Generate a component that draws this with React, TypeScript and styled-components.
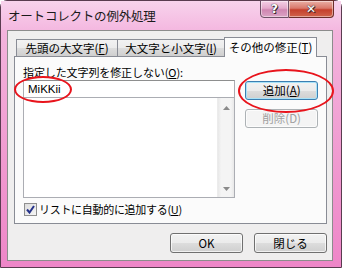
import React from "react";
import styled, { createGlobalStyle } from "styled-components";

const GlobalStyle = createGlobalStyle`
  html, body {
    margin: 0;
    padding: 0;
    width: 342px;
    height: 268px;
    overflow: hidden;
    background: #fff;
  }
  * { box-sizing: border-box; }
`;

const jp = `"Noto Sans CJK JP", "Noto Sans", sans-serif`;

const Window = styled.div`
  position: relative;
  width: 342px;
  height: 268px;
  border: 1px solid #5a3c50;
  border-radius: 7px 7px 0 0;
  background: linear-gradient(180deg, #f6c3e4 0%, #f3b3dc 12%, #f09ad0 60%, #ee86c8 100%);
  display: flex;
  flex-direction: column;
  font-family: ${jp};
  color: #000;
`;

const TitleBar = styled.div`
  height: 29px;
  display: flex;
  align-items: flex-start;
  background: linear-gradient(180deg, #f8d3ec 0%, #f4b8e0 100%);
`;

const Title = styled.div`
  padding-left: 7px;
  line-height: 29px;
  font-size: 12.5px;
  color: #1a1a1a;
  letter-spacing: -0.2px;
`;

const Controls = styled.div`
  margin-left: auto;
  margin-right: 7px;
  margin-top: -1px;
  display: flex;
`;

const CaptionButton = styled.div<{ $close?: boolean }>`
  width: ${(p) => (p.$close ? 45 : 29)}px;
  height: 18px;
  display: flex;
  align-items: center;
  justify-content: center;
  border: 1px solid ${(p) => (p.$close ? "#6b2e2a" : "#6e5066")};
  border-left-width: ${(p) => (p.$close ? 0 : 1)}px;
  border-radius: ${(p) => (p.$close ? "0 0 4px 0" : "0 0 0 4px")};
  background: ${(p) =>
    p.$close
      ? "linear-gradient(180deg, #eab0a6 0%, #d9786a 45%, #c5402c 55%, #d0644c 100%)"
      : "linear-gradient(180deg, #f4d0e6 0%, #e4a9cb 45%, #cf86b1 55%, #dba3c4 100%)"};
  box-shadow: inset 0 0 0 1px rgba(255, 255, 255, 0.45);
  color: #fff;
  font-family: "DejaVu Sans", sans-serif;
  font-weight: bold;
  font-size: ${(p) => (p.$close ? 12 : 12)}px;
  text-shadow: 0 0 1px #3a2a30, 0 0 1px #3a2a30, 1px 1px 0 #3a2a30;
`;

const Client = styled.div`
  flex: 1;
  margin: 0 8px 6px 6px;
  background: #efeeee;
  border: 1px solid #8c8c8c;
  padding: 6px 5px 0 6px;
  display: flex;
  flex-direction: column;
`;

const TabRow = styled.div`
  height: 20px;
  display: flex;
  align-items: flex-end;
  padding-left: 2px;
  margin-bottom: -1px;
  position: relative;
  z-index: 1;
`;

const Tab = styled.div<{ $w: number; $active?: boolean }>`
  width: ${(p) => p.$w}px;
  height: ${(p) => (p.$active ? 20 : 17)}px;
  margin-bottom: ${(p) => (p.$active ? 0 : 1)}px;
  margin-left: ${(p) => (p.$active ? -1 : 0)}px;
  border: 1px solid #898c95;
  border-bottom: none;
  border-right-width: ${(p) => (p.$active ? 1 : 0)}px;
  background: ${(p) =>
    p.$active ? "#fcfcfc" : "linear-gradient(180deg, #f2f2f2 0%, #ebebeb 50%, #dddddd 51%, #cfcfcf 100%)"};
  font-size: 11.5px;
  line-height: ${(p) => (p.$active ? 19 : 16)}px;
  text-align: center;
  white-space: nowrap;
  &:nth-child(2) {
    border-right-width: 1px;
  }
`;

const Key = styled.span`
  text-decoration: underline;
  text-underline-offset: 1px;
`;

const Panel = styled.div`
  height: 168px;
  border: 1px solid #898c95;
  background: #fbfbfb;
  padding: 8px 8px 0 8px;
  display: flex;
  flex-direction: column;
`;

const FieldLabel = styled.div`
  font-size: 11px;
  line-height: 14px;
  letter-spacing: -0.1px;
  height: 15px;
`;

const Row = styled.div`
  display: flex;
  gap: 10px;
`;

const LeftCol = styled.div`
  width: 213px;
  display: flex;
  flex-direction: column;
`;

const RightCol = styled.div`
  width: 73px;
  padding-top: 1px;
  display: flex;
  flex-direction: column;
  gap: 9px;
`;

const TextInput = styled.div`
  height: 18px;
  border: 1px solid #abadb3;
  border-top-color: #8e8f8f;
  background: #fff;
  padding-left: 4px;
  font-family: "Liberation Sans", sans-serif;
  font-size: 11.5px;
  line-height: 16px;
`;

const ListBox = styled.div`
  height: 100px;
  border: 1px solid #abadb3;
  border-top: none;
  background: #fff;
  display: flex;
  justify-content: flex-end;
`;

const ScrollBar = styled.div`
  width: 17px;
  background: linear-gradient(90deg, #e8e8e8 0%, #f4f4f4 20%, #f4f4f4 80%, #e8e8e8 100%);
  border-left: 1px solid #ececec;
  display: flex;
  flex-direction: column;
  justify-content: space-between;
  align-items: center;
  padding: 8px 0 6px;
`;

const CheckRow = styled.div`
  margin-top: 4px;
  display: flex;
  align-items: center;
  gap: 2px;
  padding-left: 1px;
  font-size: 11px;
  letter-spacing: -0.3px;
  line-height: 14px;
`;

const CheckBox = styled.div`
  width: 13px;
  height: 13px;
  border: 1px solid #8f8f8f;
  background: linear-gradient(135deg, #dcdcdc 0%, #f6f6f6 100%);
  display: flex;
  align-items: center;
  justify-content: center;
`;

const Button = styled.div<{ $focus?: boolean; $disabled?: boolean }>`
  height: ${(p) => (p.$focus ? 19 : 19)}px;
  border: 1px solid ${(p) => (p.$focus ? "#3c7fb1" : p.$disabled ? "#adb2b5" : "#707070")};
  border-radius: 3px;
  background: ${(p) =>
    p.$disabled
      ? "#f4f4f4"
      : "linear-gradient(180deg, #f2f2f2 0%, #ebebeb 50%, #dddddd 51%, #cfcfcf 100%)"};
  box-shadow: ${(p) => (p.$focus ? "inset 0 0 0 1px #a8e2f8" : "inset 0 0 0 1px rgba(255,255,255,0.7)")};
  color: ${(p) => (p.$disabled ? "#a0a0a0" : "#000")};
  font-size: 11.5px;
  line-height: 17px;
  text-align: center;
  white-space: nowrap;
`;

const Footer = styled.div`
  margin-top: 9px;
  display: flex;
  justify-content: flex-end;
  gap: 11px;
`;

const FooterButton = styled(Button)`
  width: 73px;
  height: 20px;
  line-height: 18px;
`;

const Annotation = styled.div<{ $x: number; $y: number; $w: number; $h: number }>`
  position: absolute;
  left: ${(p) => p.$x}px;
  top: ${(p) => p.$y}px;
  width: ${(p) => p.$w}px;
  height: ${(p) => p.$h}px;
  border: 2px solid #e8141c;
  border-radius: 50%;
  pointer-events: none;
  z-index: 5;
`;

const Arrow = ({ up }: { up?: boolean }) => (
  <svg width="7" height="4" viewBox="0 0 7 4">
    <path d={up ? "M0 4 L3.5 0 L7 4 Z" : "M0 0 L3.5 4 L7 0 Z"} fill="#8a8a8a" />
  </svg>
);

export default function App() {
  return (
    <>
      <GlobalStyle />
      <Window>
        <TitleBar>
          <Title>オートコレクトの例外処理</Title>
          <Controls>
            <CaptionButton>?</CaptionButton>
            <CaptionButton $close>✕</CaptionButton>
          </Controls>
        </TitleBar>
        <Client>
          <TabRow>
            <Tab $w={101}>
              先頭の大文字(<Key>F</Key>)
            </Tab>
            <Tab $w={108}>
              大文字と小文字(<Key>I</Key>)
            </Tab>
            <Tab $w={93} $active>
              その他の修正(<Key>T</Key>)
            </Tab>
          </TabRow>
          <Panel>
            <FieldLabel>
              指定した文字列を修正しない(<Key>O</Key>):
            </FieldLabel>
            <Row>
              <LeftCol>
                <TextInput>MiKKii</TextInput>
                <ListBox>
                  <ScrollBar>
                    <Arrow up />
                    <Arrow />
                  </ScrollBar>
                </ListBox>
                <CheckRow>
                  <CheckBox>
                    <svg width="9" height="9" viewBox="0 0 9 9">
                      <path d="M1 4.5 L3.5 7.5 L8 1" stroke="#26338a" strokeWidth="2" fill="none" />
                    </svg>
                  </CheckBox>
                  <span>
                    リストに自動的に追加する(<Key>U</Key>)
                  </span>
                </CheckRow>
              </LeftCol>
              <RightCol>
                <Button $focus>
                  追加(<Key>A</Key>)
                </Button>
                <Button $disabled>削除(D)</Button>
              </RightCol>
            </Row>
          </Panel>
          <Footer>
            <FooterButton>OK</FooterButton>
            <FooterButton>閉じる</FooterButton>
          </Footer>
        </Client>
        <Annotation $x={13} $y={75} $w={58} $h={27} />
        <Annotation $x={237} $y={68} $w={96} $h={44} />
      </Window>
    </>
  );
}
